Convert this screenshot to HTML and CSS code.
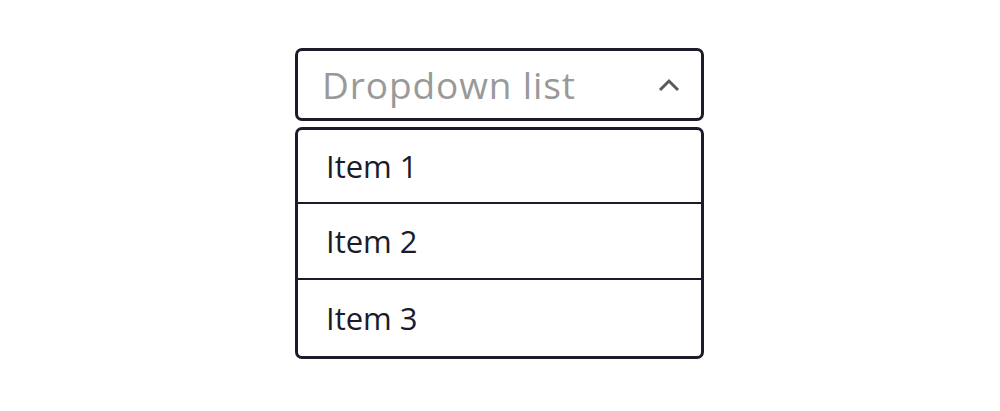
FILE: index.html
```html
<!DOCTYPE html>
<html lang="en">
<head>
  <meta charset="UTF-8">
  <meta name="viewport" content="width=device-width, initial-scale=1.0">
  <title>Dropdown</title>
  <link rel="stylesheet" href="styles.css">
</head>
<body>
  <div class="dropdown">
    <div class="dropdown-toggle">
      <span class="placeholder">Dropdown list</span>
      <svg class="chevron" width="24" height="16" viewBox="0 0 24 16">
        <polyline points="3,13 12,4 21,13" fill="none" stroke="#5a5a5a" stroke-width="3"/>
      </svg>
    </div>
    <ul class="dropdown-menu">
      <li>Item 1</li>
      <li>Item 2</li>
      <li>Item 3</li>
    </ul>
  </div>
</body>
</html>
```

FILE: styles.css
```css
body { margin: 0; background: #fff; font-family: "Open Sans", sans-serif; color: #1b1b29; }
.dropdown { width: 409px; margin: 48px 0 0 295px; display: flex; flex-direction: column; gap: 6px; }
.dropdown-toggle { height: 73px; box-sizing: border-box; border: 3px solid #1b1b29; border-radius: 7px; display: flex; align-items: center; justify-content: space-between; padding: 0 20px 0 24px; }
.placeholder { font-size: 37px; color: #999; letter-spacing: 0.9px; }
.chevron { display: block; }
.dropdown-menu { list-style: none; margin: 0; padding: 0; border: 3px solid #1b1b29; border-radius: 7px; }
.dropdown-menu li { height: 74px; display: flex; align-items: center; padding: 0 28px; font-size: 31px; border-top: 2px solid #1b1b29; }
.dropdown-menu li:first-child { border-top: none; height: 72px; }
.dropdown-menu li:last-child { height: 76px; }
```
